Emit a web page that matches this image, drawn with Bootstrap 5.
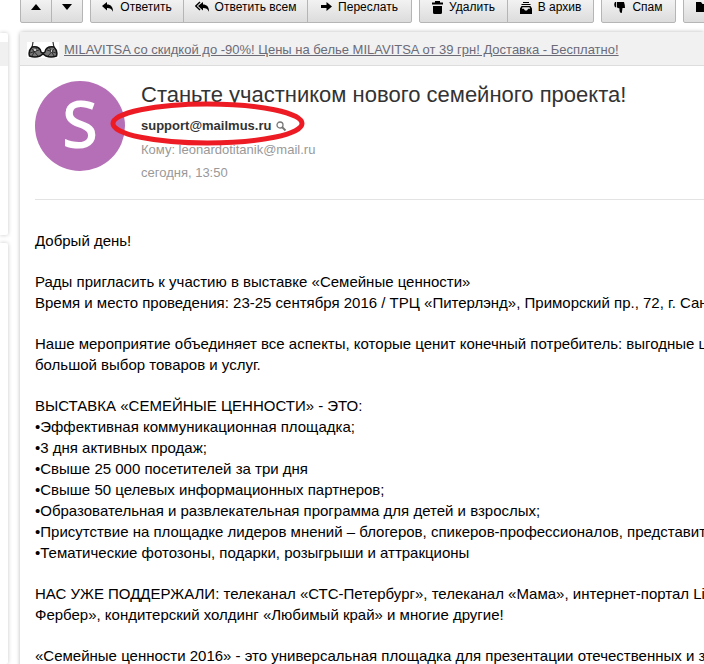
<!DOCTYPE html>
<html lang="ru">
<head>
<meta charset="utf-8">
<meta name="viewport" content="width=device-width, initial-scale=1">
<title>Станьте участником нового семейного проекта!</title>
<link href="https://cdn.jsdelivr.net/npm/bootstrap@5.3.0/dist/css/bootstrap.min.css" rel="stylesheet">
<style>
body{font-family:"Liberation Sans",Arial,sans-serif;color:#000;background:#fff}
.shell{height:100vh}
.rail{width:8px}
.rail-box{box-shadow:0 0 4px rgba(0,0,0,.22);border-radius:0 2px 2px 0;background:#fff}
.rail-top{height:202px;margin-top:33px;padding-top:9px}
.rail-current{height:24px;background:#f0f0f0}
.workspace{margin-left:12px;min-width:0}
.tools{height:23px;gap:7px;white-space:nowrap}
.tools .btn{height:32px;flex:none;display:flex;align-items:center;justify-content:center;gap:6px;padding:0;font-size:12px;line-height:16px;color:#000;border:1px solid #b5b5b5;border-radius:2px;background:linear-gradient(#fafafa,#dcdcdc)}
.tools .btn svg{flex:none}
.tools .btn-group{flex:none}
.w-arrow{width:32px}
.w-reply{width:94px}
.w-all{width:125px}
.w-fwd{width:105px}
.w-del{width:89px}
.w-arch{width:87px}
.w-spam{width:75px}
.w-move{width:90px}
.pane{margin-top:9px;box-shadow:0 0 4px rgba(0,0,0,.28);border-radius:3px 0 0 0;background:#fff}
.promo{height:34px;background:#f1f1f1;border-bottom:1px solid #ddd;padding:2px 0 0 7px;gap:5px;font-size:13px;white-space:nowrap}
.promo a{color:#6b6b78}
.msg{padding:0 0 0 15px}
.msg-head{height:134px;padding-top:15px;gap:16px;border-bottom:1px solid #e3e3e3;white-space:nowrap}
.avatar{width:90px;height:90px;background:#b56fb7;color:#fff;font:400 63px/84px "Open Sans",sans-serif;-webkit-text-stroke:2px #fff;text-align:center}
.subject{font-size:22px;line-height:28px;margin:0;color:#333}
.meta{font-size:13px;line-height:23px;color:#999}
.from{font-size:13px;line-height:18px;color:#333;margin:8px 0 3px;gap:5px}
.sender{position:relative}
.ring{position:absolute;left:-31px;top:-16px;pointer-events:none}
.letter{padding-top:30px;font-size:15px;line-height:21px;white-space:nowrap}
.letter p{margin:0 0 20px}
</style>
<script src="https://cdn.jsdelivr.net/npm/bootstrap@5.3.0/dist/js/bootstrap.bundle.min.js"></script>
</head>
<body>
<div class="shell d-flex overflow-hidden">
<aside class="rail d-flex flex-column flex-shrink-0">
<div class="rail-box rail-top"><div class="rail-current"></div></div>
<div class="rail-box flex-grow-1 mt-2"></div>
</aside>
<div class="workspace flex-grow-1 d-flex flex-column">
<div class="tools d-flex flex-shrink-0 align-items-end overflow-hidden" role="toolbar" aria-label="Действия с письмом">
<div class="btn-group">
<button class="btn w-arrow" type="button" aria-label="Предыдущее"><svg width="10" height="6"><path d="M0 6L5 0L10 6Z"/></svg></button>
<button class="btn w-arrow" type="button" aria-label="Следующее"><svg width="10" height="6"><path d="M0 0H10L5 6Z"/></svg></button>
</div>
<div class="btn-group">
<button class="btn w-reply" type="button"><svg width="12" height="12" viewBox="0 0 12 12"><path d="M0 5L5 1V3.400C9 3.400 11.200 6 11 10.800C9.700 8 8 7 5 7V9.400Z"/></svg>Ответить</button>
<button class="btn w-all" type="button"><svg width="14" height="12" viewBox="0 0 14 12"><path d="M3 5L8 1V3.400C12 3.400 14.200 6 14 10.800C12.700 8 11 7 8 7V9.400Z"/><path d="M5 1L.8 5L5 9" fill="none" stroke="#000" stroke-width="1.400"/></svg>Ответить всем</button>
<button class="btn w-fwd" type="button"><svg width="11" height="12" viewBox="0 0 11 12"><path d="M0 4H5.500V1L11 5.500L5.500 10V7H0Z"/></svg>Переслать</button>
</div>
<div class="btn-group">
<button class="btn w-del" type="button"><svg width="11" height="13" viewBox="0 0 11 13"><path d="M0 1.500H3V0H8V1.500H11V3.500H0ZM1 5H10V11.500Q10 13 8.500 13H2.500Q1 13 1 11.500Z"/></svg>Удалить</button>
<button class="btn w-arch" type="button"><svg width="12" height="13" viewBox="0 0 12 13"><path d="M3 1.500H9M1.500 3.500H10.500" stroke="#000" stroke-width="1.200"/><path d="M1.500 5H10.500L12 7.500V13H0V7.500ZM2.500 6.200L1.800 7.800H3.800L5 9.500H7L8.200 7.800H10.200L9.500 6.200Z" fill-rule="evenodd"/></svg>В архив</button>
</div>
<div class="btn-group"><button class="btn w-spam" type="button"><svg width="12" height="12" viewBox="0 0 12 12"><path d="M3 1H10Q11 4 11 7H8.500L7.800 12Q5.500 12 5.500 9.500V7.500L3 6.500ZM1 1H2.200V6.200H1Q-.5 3.500 1 1Z"/></svg>Спам</button></div>
<div class="btn-group"><button class="btn w-move justify-content-start ps-2" type="button" aria-label="Переместить"><svg class="ms-1" width="14" height="10"><path d="M0 0H5L6.500 2H14V10H0Z"/></svg></button></div>
</div>
<main class="pane flex-grow-1">
<div class="promo d-flex align-items-center">
<svg width="32" height="16" viewBox="0 0 32 16" aria-hidden="true"><rect width="32" height="16" fill="#fff"/><path d="M5 6L6 0M27 6L26 0" stroke="#333" stroke-width="1.200"/><path d="M5 5Q13 4 14 10Q16 12 18 10Q19 4 27 5Q31 9 29.500 14Q24 16 19 14L16 12L13 14Q8 16 2.500 14Q1 9 5 5Z" fill="#777" stroke="#111" stroke-width="1.500"/><path d="M4 6L11 14M10 5L5 14M12 8L3 11M28 6L21 14M22 5L27 14M20 8L29 11" stroke="#252525" stroke-width=".9"/><path d="M7 8H9M24 9H25" stroke="#ccc" stroke-width="2"/></svg>
<a href="#">MILAVITSA со скидкой до -90%! Цены на белье MILAVITSA от 39 грн! Доставка - Бесплатно!</a>
</div>
<article class="msg">
<header class="msg-head d-flex">
<div class="avatar rounded-circle flex-shrink-0">S</div>
<div>
<h1 class="subject fw-normal">Станьте участником нового семейного проекта!</h1>
<div class="from sender d-flex align-items-center"><b>support@mailmus.ru</b>
<svg width="11" height="11" viewBox="0 0 11 11" fill="none" stroke="#777"><circle cx="4" cy="4" r="3" stroke-width="1.300"/><path d="M6 6L9.500 9.500" stroke-width="2"/></svg>
<svg class="ring" width="195" height="46" viewBox="0 0 195 46" fill="none" aria-hidden="true"><ellipse cx="97.500" cy="22.500" rx="94.500" ry="19.500" stroke="#ed1c24" stroke-width="5"/></svg></div>
<div class="meta">Кому: leonardotitanik@mail.ru</div>
<div class="meta">сегодня, 13:50</div>
</div>
</header>
<div class="letter">
<p>Добрый день!</p>
<p>Рады пригласить к участию в выставке «Семейные ценности»<br>Время и место проведения: 23-25 сентября 2016 / ТРЦ «Питерлэнд», Приморский пр., 72, г. Санкт</p>
<p>Наше мероприятие объединяет все аспекты, которые ценит конечный потребитель: выгодные це<br>большой выбор товаров и услуг.</p>
<p>ВЫСТАВКА «СЕМЕЙНЫЕ ЦЕННОСТИ» - ЭТО:<br>•Эффективная коммуникационная площадка;<br>•3 дня активных продаж;<br>•Свыше 25 000 посетителей за три дня<br>•Свыше 50 целевых информационных партнеров;<br>•Образовательная и развлекательная программа для детей и взрослых;<br>•Присутствие на площадке лидеров мнений – блогеров, спикеров-профессионалов, представител<br>•Тематические фотозоны, подарки, розыгрыши и аттракционы</p>
<p>НАС УЖЕ ПОДДЕРЖАЛИ: телеканал «СТС-Петербург», телеканал «Мама», интернет-портал Little<br>Фербер», кондитерский холдинг «Любимый край» и многие другие!</p>
<p>«Семейные ценности 2016» - это универсальная площадка для презентации отечественных и зар</p>
</div>
</article>
</main>
</div>
</div>
</body>
</html>
